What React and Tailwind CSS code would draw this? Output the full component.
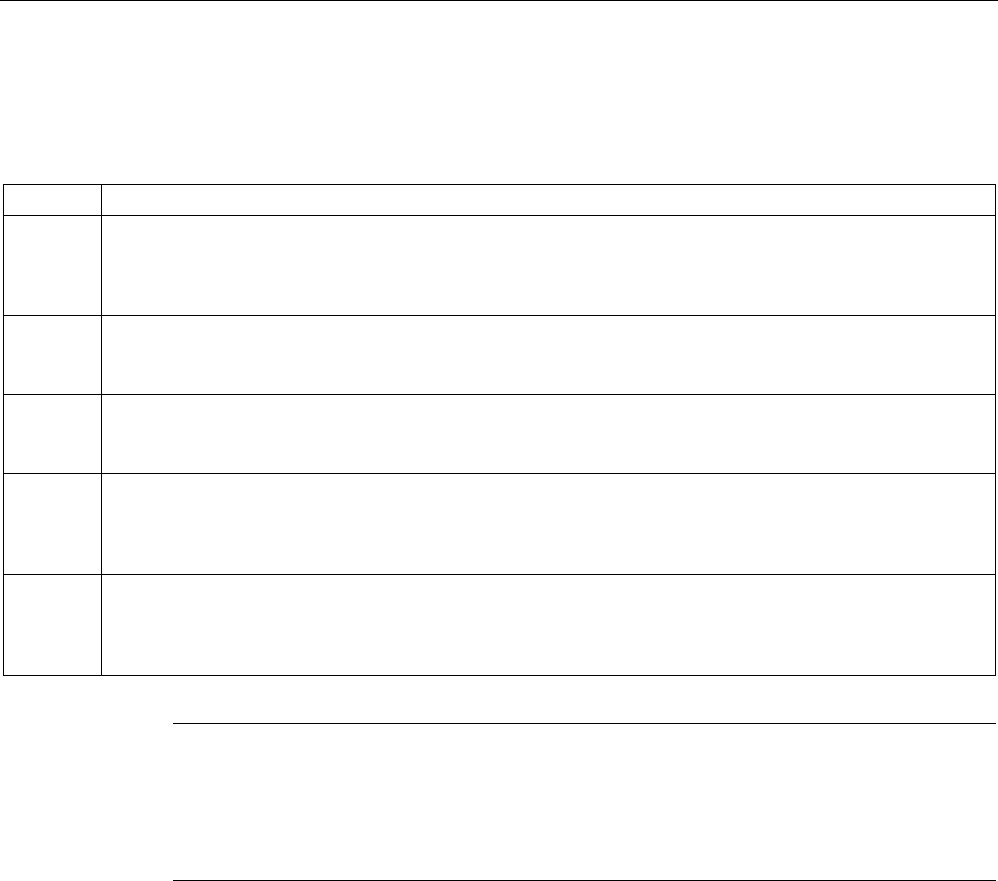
import React from 'react';

const rows = [100, 79, 79, 101, 101];

const heightClass = {
  100: 'h-[100px]',
  79: 'h-[79px]',
  101: 'h-[101px]',
};

export default function App() {
  return (
    <div className="w-[998px] h-[881px] bg-white border-t border-black" style={{ fontFamily: '"Liberation Sans", Arial, sans-serif' }}>
      {/* blank heading area */}
      <div className="h-[183px]"></div>

      {/* table */}
      <div className="ml-[3px] w-[993px] border border-black">
        <div className="flex h-[30px]">
          <div className="w-[98px] border-r border-black"></div>
          <div className="flex-1"></div>
        </div>
        {rows.map((h, i) => (
          <div key={i} className={`flex border-t border-black ${heightClass[h]}`}>
            <div className="w-[98px] border-r border-black"></div>
            <div className="flex-1"></div>
          </div>
        ))}
      </div>

      {/* note block */}
      <div className="ml-[173px] mt-[47px] w-[823px] h-[158px] border-t border-b border-black"></div>
    </div>
  );
}
